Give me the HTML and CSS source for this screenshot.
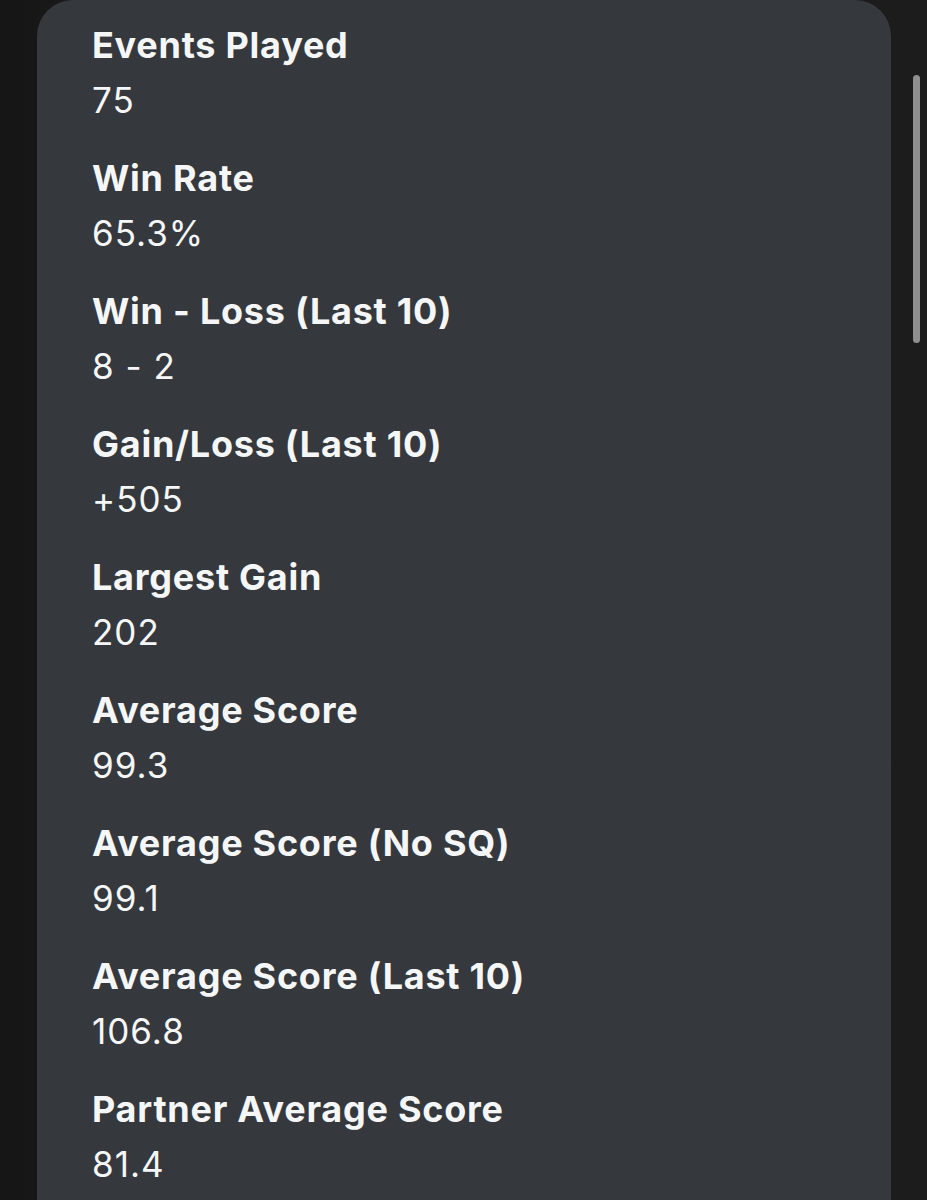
FILE: index.html
```html
<!DOCTYPE html>
<html lang="en">
<head>
<meta charset="utf-8">
<title>Stats</title>
<link rel="stylesheet" href="styles.css">
</head>
<body>
<main class="screen">
  <section class="card">
    <div class="stat"><div class="label">Events Played</div><div class="value">75</div></div>
    <div class="stat"><div class="label">Win Rate</div><div class="value">65.3%</div></div>
    <div class="stat"><div class="label">Win - Loss (Last 10)</div><div class="value">8 - 2</div></div>
    <div class="stat"><div class="label">Gain/Loss (Last 10)</div><div class="value">+505</div></div>
    <div class="stat"><div class="label">Largest Gain</div><div class="value">202</div></div>
    <div class="stat"><div class="label">Average Score</div><div class="value">99.3</div></div>
    <div class="stat"><div class="label">Average Score (No SQ)</div><div class="value">99.1</div></div>
    <div class="stat"><div class="label">Average Score (Last 10)</div><div class="value">106.8</div></div>
    <div class="stat"><div class="label">Partner Average Score</div><div class="value">81.4</div></div>
  </section>
  <div class="scrollbar"></div>
</main>
</body>
</html>
```
FILE: styles.css
```css
html, body {
  margin: 0;
  padding: 0;
  background: #1a1a1a;
}
.screen {
  position: relative;
  width: 927px;
  height: 1200px;
  overflow: hidden;
  background: linear-gradient(90deg, #151515 0%, #1b1b1b 10%, #1c1c1c 100%);
}
.card {
  margin-left: 37px;
  width: 854px;
  min-height: 1200px;
  box-sizing: border-box;
  padding: 23px 0 0 55px;
  background: #35393d;
  border-radius: 36px 36px 0 0;
  font-family: Inter, "Noto Sans", sans-serif;
  color: #f5f6f7;
  display: flex;
  flex-direction: column;
  gap: 34px;
}
.stat {
  display: flex;
  flex-direction: column;
  gap: 11px;
}
.label {
  font-size: 36px;
  font-weight: 700;
  line-height: 44px;
  letter-spacing: 0.75px;
}
.value {
  font-size: 35px;
  font-weight: 400;
  line-height: 44px;
  letter-spacing: 1px;
}
.scrollbar {
  position: absolute;
  left: 913px;
  top: 75px;
  width: 7px;
  height: 268px;
  border-radius: 4px;
  background: #8f8f8f;
}
```
